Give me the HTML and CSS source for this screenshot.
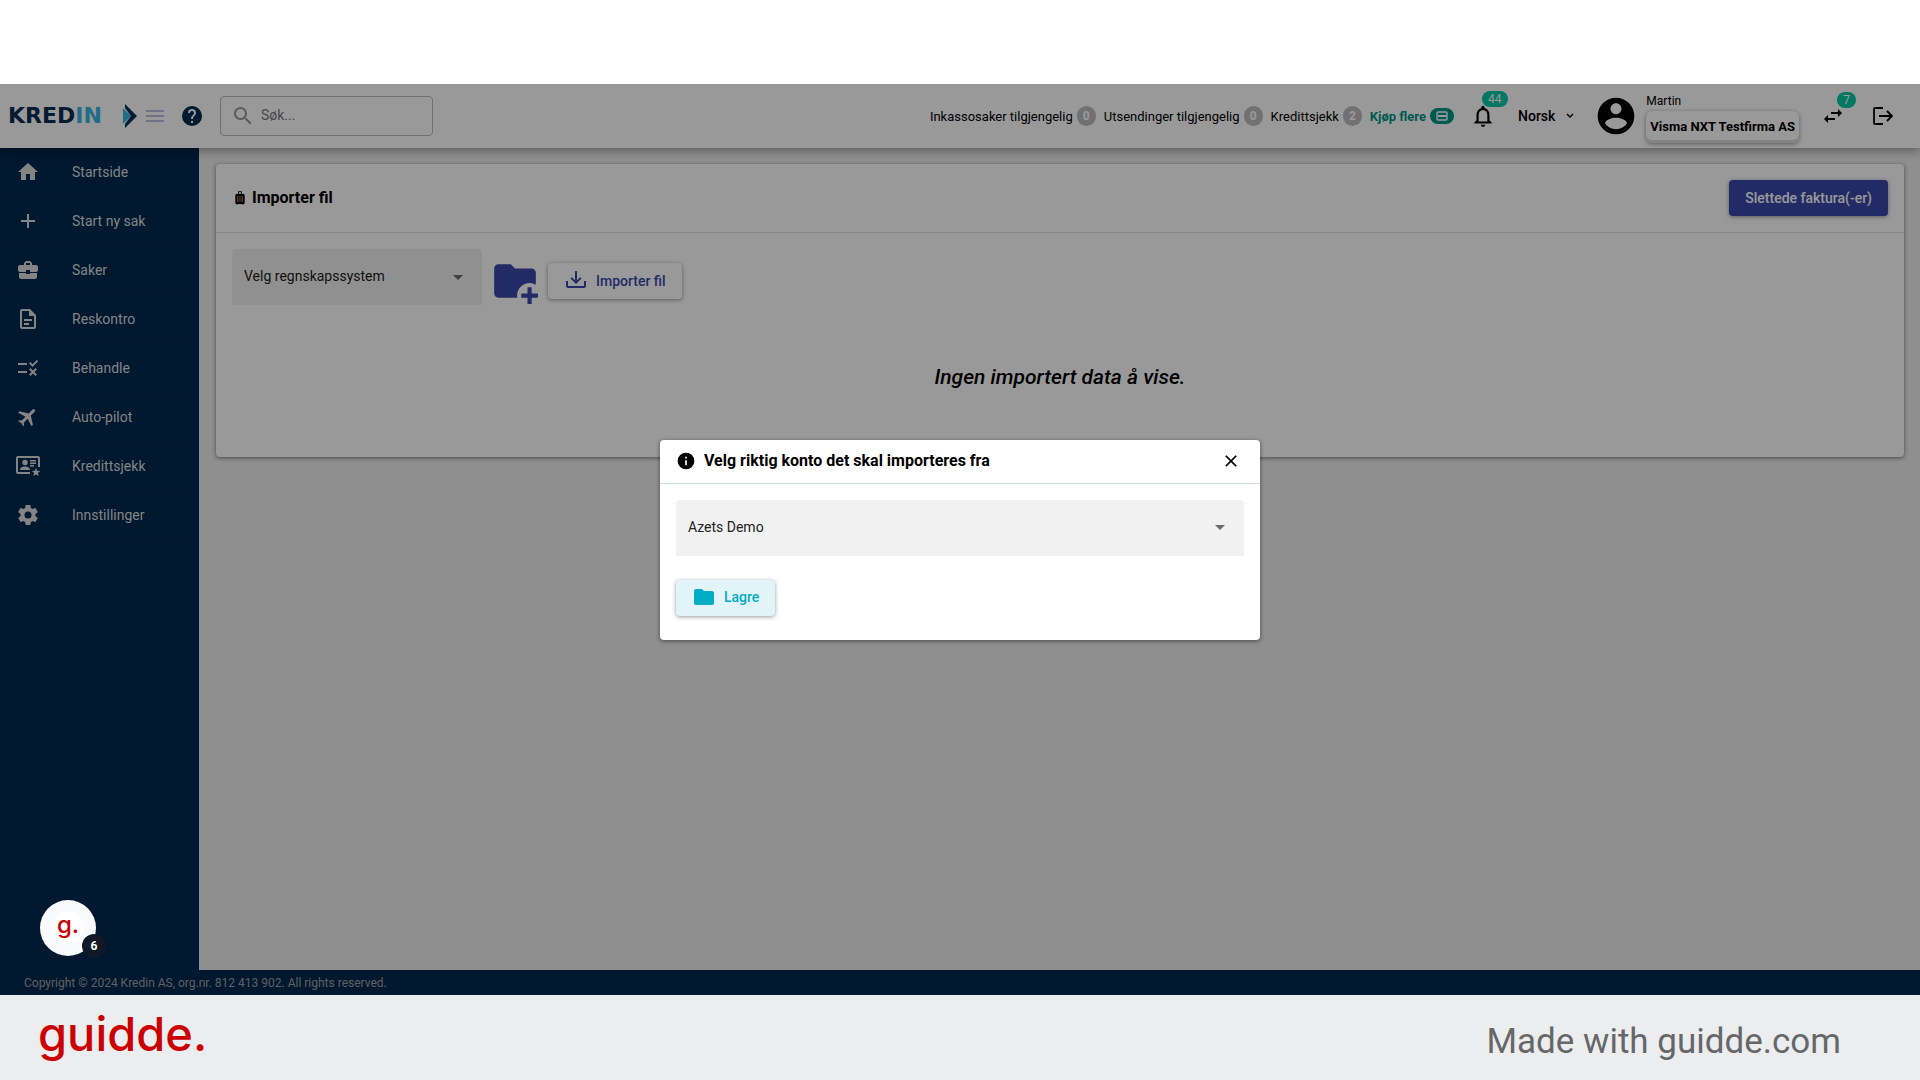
FILE: index.html
```html
<!DOCTYPE html>
<html lang="no">
<head>
<meta charset="utf-8">
<meta name="viewport" content="width=device-width, initial-scale=1">
<title>Kredin – Importer fil</title>
<link rel="stylesheet" href="styles.css">
</head>
<body>
<div class="app">
  <header class="topbar">
    <a class="logo" href="#" aria-label="Kredin"><span class="logo-word">KRED<span class="logo-accent">IN</span></span><svg width="14" height="24" viewBox="0 0 14 24"><path d="M0 4v16l8-8z" fill="#37b4e0"/><path d="M2 0l12 12L2 24v-4l6-8-6-8z" fill="#0b2d57"/></svg></a>
    <button class="icon-btn menu" aria-label="Meny"><svg width="18" height="12" viewBox="0 0 18 12"><path d="M0 1h18M0 6h18M0 11h18" stroke="#b9bce0" stroke-width="2"/></svg></button>
    <button class="icon-btn help" aria-label="Hjelp"><svg class="i24" viewBox="0 0 24 24"><path d="M15.07 11.25l-.9.92C13.45 12.89 13 13.5 13 15h-2v-.5c0-1.11.45-2.11 1.17-2.83l1.24-1.26c.37-.36.59-.86.59-1.41a2 2 0 0 0-4 0H8a4 4 0 0 1 8 0c0 .88-.36 1.67-.93 2.25M13 19h-2v-2h2M12 2a10 10 0 1 0 0 20 10 10 0 0 0 0-20z"/></svg></button>
    <label class="search"><svg class="i24" viewBox="0 0 24 24"><path d="M15.5 14h-.79l-.28-.27C15.41 12.59 16 11.11 16 9.5 16 5.91 13.09 3 9.5 3S3 5.91 3 9.5 5.91 16 9.5 16c1.61 0 3.09-.59 4.23-1.57l.27.28v.79l5 4.99L20.49 19l-4.99-5zm-6 0C7.01 14 5 11.99 5 9.5S7.01 5 9.5 5 14 7.01 14 9.5 11.99 14 9.5 14z"/></svg><input type="text" placeholder="Søk..." aria-label="Søk"></label>
    <div class="credits">
      <span class="credit">Inkassosaker tilgjengelig <b class="count">0</b></span>
      <span class="credit">Utsendinger tilgjengelig <b class="count">0</b></span>
      <span class="credit">Kredittsjekk <b class="count">2</b></span>
      <a class="credit buy" href="#">Kjøp flere <span class="buy-pill"><svg width="12" height="10" viewBox="0 0 12 10"><path d="M2 1h8a1 1 0 0 1 1 1v6a1 1 0 0 1-1 1H2a1 1 0 0 1-1-1V2a1 1 0 0 1 1-1z" fill="none" stroke="currentColor" stroke-width="1.4"/><path d="M2 5h8" stroke="currentColor" stroke-width="2"/></svg></span></a>
    </div>
    <button class="icon-btn bell" aria-label="Varsler"><svg class="i26" viewBox="0 0 24 24"><path d="M12 22c1.1 0 2-.9 2-2h-4c0 1.1.9 2 2 2zm6-6v-5c0-3.07-1.63-5.64-4.5-6.32V4c0-.83-.67-1.5-1.5-1.5s-1.5.67-1.5 1.5v.68C7.64 5.36 6 7.92 6 11v5l-2 2v1h16v-1l-2-2zm-2 1H8v-6c0-2.48 1.51-4.5 4-4.5s4 2.02 4 4.5v6z"/></svg><span class="badge">44</span></button>
    <button class="language">Norsk <svg width="8" height="6" viewBox="0 0 8 6"><path d="M1 1l3 3 3-3" fill="none" stroke="currentColor" stroke-width="1.4"/></svg></button>
    <svg class="avatar" viewBox="0 0 24 24"><path d="M12 2C6.48 2 2 6.48 2 12s4.48 10 10 10 10-4.48 10-10S17.52 2 12 2zm0 3c1.66 0 3 1.34 3 3s-1.34 3-3 3-3-1.34-3-3 1.34-3 3-3zm0 14.2c-2.5 0-4.71-1.28-6-3.22.03-1.99 4-3.08 6-3.08 1.99 0 5.97 1.09 6 3.08-1.29 1.94-3.5 3.22-6 3.22z"/></svg>
    <div class="user"><span class="user-name">Martin</span><button class="company">Visma NXT Testfirma AS</button></div>
    <button class="icon-btn swap" aria-label="Bytt firma"><svg class="i24" viewBox="0 0 24 24"><path d="M6.99 11L3 15l3.99 4v-3H14v-2H6.99v-3zM21 9l-3.99-4v3H10v2h7.01v3L21 9z"/></svg><span class="badge">7</span></button>
    <button class="icon-btn logout" aria-label="Logg ut"><svg width="20" height="18" viewBox="0 0 20 18"><path d="M10 1H2a1 1 0 0 0-1 1v14a1 1 0 0 0 1 1h8M6 9h12M14 4l5 5-5 5" fill="none" stroke="#000" stroke-width="1.8"/></svg></button>
  </header>

  <div class="body">
    <nav class="sidebar">
      <a href="#"><svg class="i24" viewBox="0 0 24 24"><path d="M10 20v-6h4v6h5v-8h3L12 3 2 12h3v8z"/></svg>Startside</a>
      <a href="#"><svg class="i24" viewBox="0 0 24 24"><path d="M19 13h-6v6h-2v-6H5v-2h6V5h2v6h6z"/></svg>Start ny sak</a>
      <a href="#"><svg class="i24" viewBox="0 0 24 24"><path d="M10 16v-1H3.01L3 19c0 1.11.89 2 2 2h14c1.11 0 2-.89 2-2v-4h-7v1h-4zm10-9h-4.01V5l-2-2h-4l-2 2v2H4c-1.1 0-2 .9-2 2v3c0 1.11.89 2 2 2h6v-2h4v2h6c1.1 0 2-.9 2-2V9c0-1.1-.9-2-2-2zm-6 0h-4V5h4v2z"/></svg>Saker</a>
      <a href="#"><svg class="i24" viewBox="0 0 24 24"><path d="M6 2a2 2 0 0 0-2 2v16a2 2 0 0 0 2 2h12a2 2 0 0 0 2-2V8l-6-6H6m0 2h7v5h5v11H6V4m2 8v2h8v-2H8m0 4v2h5v-2H8z"/></svg>Reskontro</a>
      <a href="#"><svg class="i24" viewBox="0 0 24 24"><path d="M16.54 11L13 7.46l1.41-1.41 2.12 2.12 4.24-4.24 1.41 1.41L16.54 11zM11 7H2v2h9V7zm10 6.41L19.59 12 17 14.59 14.41 12 13 13.41 15.59 16 13 18.59 14.41 20 17 17.41 19.59 20 21 18.59 18.41 16 21 13.41zM11 15H2v2h9v-2z"/></svg>Behandle</a>
      <a href="#"><svg class="i24" viewBox="0 0 24 24"><path transform="rotate(45 12 12)" d="M21 16v-2l-8-5V3.500c0-.83-.67-1.500-1.500-1.500S10 2.670 10 3.500V9l-8 5v2l8-2.500V19l-2 1.500V22l3.500-1 3.500 1v-1.500L13 19v-5.500l8 2.500z"/></svg>Auto-pilot</a>
      <a href="#"><svg class="i24" viewBox="0 0 24 24"><path d="M2 2h20a2 2 0 0 1 2 2v9h-2V4H2v14h12v2H2a2 2 0 0 1-2-2V4a2 2 0 0 1 2-2z"/><circle cx="9" cy="8.500" r="2.700"/><path d="M4 16c0-2.500 2.500-3.500 5-3.500s5 1 5 3.500zM14 6h6v1.500h-6zM14 8.500h6V10h-6zM14 11h4v1.500h-4zM20 14l1.200 2.800 3 .2-2.300 2 .8 3-2.700-1.600-2.700 1.600.8-3-2.300-2 3-.2z"/></svg>Kredittsjekk</a>
      <a href="#"><svg class="i24" viewBox="0 0 24 24"><path d="M12 15.500A3.500 3.500 0 1 1 12 8.500a3.500 3.500 0 0 1 0 7M19.430 12.970C19.470 12.650 19.500 12.330 19.500 12C19.500 11.670 19.470 11.340 19.430 11L21.540 9.370C21.730 9.220 21.780 8.950 21.660 8.730L19.660 5.270C19.540 5.050 19.270 4.960 19.050 5.050L16.560 6.050C16.040 5.660 15.500 5.320 14.870 5.070L14.500 2.420C14.460 2.180 14.250 2 14 2H10C9.750 2 9.540 2.180 9.500 2.420L9.130 5.070C8.500 5.320 7.960 5.660 7.440 6.050L4.950 5.050C4.730 4.960 4.460 5.050 4.340 5.270L2.340 8.730C2.210 8.950 2.270 9.220 2.460 9.370L4.570 11C4.530 11.340 4.500 11.670 4.500 12C4.500 12.330 4.530 12.650 4.570 12.970L2.460 14.630C2.270 14.780 2.210 15.050 2.340 15.270L4.340 18.730C4.460 18.950 4.730 19.030 4.950 18.950L7.440 17.940C7.960 18.340 8.500 18.680 9.130 18.930L9.500 21.580C9.540 21.820 9.750 22 10 22H14C14.250 22 14.460 21.820 14.500 21.580L14.870 18.930C15.500 18.670 16.040 18.340 16.560 17.940L19.050 18.950C19.270 19.030 19.540 18.950 19.660 18.730L21.660 15.270C21.780 15.050 21.730 14.780 21.540 14.630Z"/></svg>Innstillinger</a>
    </nav>
    <main class="content">
      <section class="card">
        <div class="card-head">
          <h1><svg class="i16" viewBox="0 0 24 24"><path d="M8 9h8v9H8z" fill="#b87a3c"/><path d="M17 6h-2V3c0-.55-.45-1-1-1h-4c-.55 0-1 .45-1 1v3H7c-1.100 0-2 .9-2 2v11c0 1.100.9 2 2 2 0 .55.45 1 1 1s1-.45 1-1h6c0 .55.45 1 1 1s1-.45 1-1c1.100 0 2-.9 2-2V8c0-1.100-.9-2-2-2zM9.500 18H8V9h1.500v9zm3.250 0h-1.500V9h1.500v9zm.75-12h-3V3.500h3V6zM16 18h-1.500V9H16v9z"/></svg>Importer fil</h1>
          <button class="btn btn-primary">Slettede faktura(-er)</button>
        </div>
        <div class="toolbar">
          <div class="select system"><select aria-label="Velg regnskapssystem"><option>Velg regnskapssystem</option></select><svg class="caret" width="10" height="5" viewBox="0 0 10 5"><path d="M0 0h10L5 5z"/></svg></div>
          <div class="actions">
            <button class="icon-btn add-folder" aria-label="Ny mappe"><svg width="50" height="50" viewBox="0 0 24 24"><path d="M13 19c0 .34.04.67.09 1H4c-1.100 0-2-.9-2-2V6c0-1.110.89-2 2-2h6l2 2h8c1.100 0 2 .89 2 2v5.810A6 6 0 0 0 19 13c-3.310 0-6 2.690-6 6m7-1v-3h-2v3h-3v2h3v3h2v-3h3v-2z"/></svg></button>
            <button class="btn btn-import"><svg class="i24" viewBox="0 0 24 24"><path d="M2 12h2v5h16v-5h2v5c0 1.110-.89 2-2 2H4c-1.100 0-2-.89-2-2v-5m10 3l5.550-5.460-1.420-1.410L13 11.250V2h-2v9.250L7.880 8.130 6.460 9.550 12 15z"/></svg>Importer fil</button>
          </div>
        </div>
        <p class="empty">Ingen importert data å vise.</p>
      </section>
    </main>
  </div>
  <footer class="copyright">Copyright © 2024 Kredin AS, org.nr. 812 413 902. All rights reserved.</footer>

  <div class="backdrop">
    <div class="dialog" role="dialog" aria-modal="true" aria-labelledby="dialog-title">
      <div class="dialog-head">
        <svg class="i20" viewBox="0 0 24 24"><path d="M13 9h-2V7h2m0 10h-2v-6h2M12 2a10 10 0 1 0 0 20 10 10 0 0 0 0-20z"/></svg>
        <h2 id="dialog-title">Velg riktig konto det skal importeres fra</h2>
        <button class="icon-btn" aria-label="Lukk"><svg class="i20" viewBox="0 0 24 24"><path d="M19 6.410L17.590 5 12 10.590 6.410 5 5 6.410 10.590 12 5 17.590 6.410 19 12 13.410 17.590 19 19 17.590 13.410 12z"/></svg></button>
      </div>
      <div class="dialog-body">
        <div class="select"><select aria-label="Konto"><option>Azets Demo</option></select><svg class="caret" width="10" height="5" viewBox="0 0 10 5"><path d="M0 0h10L5 5z"/></svg></div>
        <button class="btn btn-save"><svg class="i24" viewBox="0 0 24 24"><path d="M10 4H4c-1.110 0-2 .89-2 2v12a2 2 0 0 0 2 2h16a2 2 0 0 0 2-2V8c0-1.110-.9-2-2-2h-8l-2-2z"/></svg>Lagre</button>
      </div>
    </div>
  </div>
  <button class="guide-widget" aria-label="Guider"><span class="guide-mark">g.</span><span class="guide-count">6</span></button>
</div>
<div class="brandbar">
  <span class="brand">guidde.</span>
  <span class="made">Made with guidde.com</span>
</div>
</body>
</html>
```
FILE: styles.css
```css
* { box-sizing: border-box; }

body {
  margin: 0;
  padding-top: 84px;
  min-height: 100vh;
  display: flex;
  flex-direction: column;
  background: #fff;
  color: #000;
  font-family: Roboto, "Liberation Sans", sans-serif;
  font-size: 14px;
}

button, input, select { font: inherit; color: inherit; margin: 0; }
button { border: 0; padding: 0; background: none; }
a { color: inherit; text-decoration: none; }
h1, h2, p { margin: 0; }
svg { flex: none; display: block; }

.i16 { width: 16px; height: 16px; }
.i20 { width: 20px; height: 20px; }
.i24 { width: 24px; height: 24px; }
.i26 { width: 26px; height: 26px; }

.app {
  position: relative;
  flex: 1;
  display: flex;
  flex-direction: column;
  overflow: hidden;
  background: #eee;
}

/* Top bar */
.topbar {
  position: relative;
  height: 64px;
  display: flex;
  align-items: center;
  padding: 0 27px 0 8px;
  background: #fff;
  box-shadow: 0 2px 10px rgba(0, 0, 0, .4);
}
.logo { display: flex; align-items: center; justify-content: space-between; width: 129px; color: #0b2d57; }
.logo-word { font-family: "DejaVu Sans", sans-serif; font-size: 22px; font-weight: 700; line-height: 24px; }
.logo-accent { color: #37b4e0; }
.icon-btn { position: relative; display: flex; }
.menu { margin-left: 9px; }
.help { margin-left: 16px; fill: #002850; }
.search {
  display: flex;
  align-items: center;
  gap: 6px;
  width: 213px;
  height: 40px;
  margin-left: 16px;
  padding: 0 10px;
  border: 1px solid #bbb;
  border-radius: 4px;
  fill: #9a9a9a;
}
.search input { width: 100%; min-width: 0; padding: 0 0 2px; border: 0; outline: 0; background: none; }
.search input::placeholder { color: #777; opacity: 1; }

.credits { display: flex; gap: 8px; margin-left: auto; font-size: 13px; }
.credit { display: flex; align-items: center; gap: 4px; white-space: nowrap; }
.count {
  display: grid;
  place-items: center;
  width: 19px;
  height: 20px;
  border-radius: 10px;
  background: #bdbdbd;
  color: #fff;
  font-size: 12px;
}
.buy { color: #009688; font-weight: 700; }
.buy-pill {
  display: grid;
  place-items: center;
  width: 24px;
  height: 16px;
  border-radius: 8px;
  background: #009688;
  color: #fff;
}
.badge {
  position: absolute;
  left: 12px;
  top: -12px;
  min-width: 19px;
  padding: 0 6px;
  border-radius: 8px;
  background: #00c9a7;
  color: #fff;
  font-size: 12px;
  line-height: 16px;
}
.bell { margin-left: 16px; }
.language { display: flex; align-items: center; gap: 11px; margin-left: 22px; font-weight: 500; }
.avatar { width: 44px; height: 44px; margin-left: 20px; }
.user {
  display: flex;
  flex-direction: column;
  align-items: flex-start;
  gap: 2px;
  margin-left: 8px;
  padding-top: 4px;
  font-size: 12px;
}
.user-name { line-height: 16px; }
.company {
  height: 32px;
  padding: 0 4px 2px;
  border-radius: 6px;
  background: #fff;
  font-size: 13px;
  font-weight: 700;
  box-shadow: 0 1px 4px rgba(0, 0, 0, .4), inset 0 -3px 0 #ddd;
}
.swap { margin-left: 22px; }
.swap .badge { left: 16px; }
.logout { margin-left: 28px; }

/* Sidebar and content */
.body { flex: 1; display: flex; }
.sidebar { width: 199px; background: #002850; color: #dcdcdc; fill: #dcdcdc; }
.sidebar a {
  display: flex;
  align-items: center;
  gap: 32px;
  height: 49px;
  padding-left: 16px;
  border-bottom: 1px solid #00254b;
}
.content { flex: 1; padding: 16px 16px 16px 17px; }
.card {
  background: #fff;
  border-radius: 4px;
  box-shadow: 0 1px 4px rgba(0, 0, 0, .5);
  padding-bottom: 68px;
}
.card-head {
  display: flex;
  align-items: center;
  justify-content: space-between;
  padding: 16px;
  border-bottom: 1px solid #ddd;
}
h1, h2 { font-size: 16px; font-weight: 700; line-height: 24px; }
h1 { display: flex; align-items: center; gap: 4px; }
.btn {
  display: flex;
  align-items: center;
  gap: 8px;
  height: 36px;
  padding: 0 16px 1px;
  border-radius: 4px;
  font-weight: 500;
  box-shadow: 0 1px 4px rgba(0, 0, 0, .4);
}
.btn-primary { background: #3949ab; color: #fff; }
.btn-import { background: #fff; color: #3949ab; fill: #3949ab; }
.btn-save { margin-top: 24px; background: #e3f4f8; color: #00acc6; fill: #00acc6; }
.toolbar { display: flex; align-items: flex-start; gap: 8px; padding: 16px 16px 0; }
.actions { display: flex; align-items: center; gap: 8px; height: 50px; margin-top: 7px; }
.add-folder { fill: #3949ab; }
.select { display: grid; align-items: center; background: #f1f1f1; border-radius: 4px 4px 0 0; color: #212121; }
.select > * { grid-area: 1 / 1; }
.select select {
  width: 100%;
  height: 56px;
  padding: 0 40px 2px 12px;
  border: 0;
  background: none;
  appearance: none;
}
.caret { justify-self: end; margin-right: 19px; fill: #6b6b6b; pointer-events: none; }
.system { width: 250px; }
.empty { margin-top: 59px; text-align: center; font-size: 21px; font-style: italic; font-weight: 500; line-height: 24px; }

.copyright {
  padding: 1px 24px 0;
  background: #002850;
  color: #a0a0a0;
  font-size: 12px;
  line-height: 24px;
}

/* Modal */
.backdrop {
  position: absolute;
  inset: 0;
  display: grid;
  place-items: center;
  background: rgba(0, 0, 0, .4);
}
.dialog { width: 600px; border-radius: 4px; background: #fff; box-shadow: 0 1px 4px rgba(0, 0, 0, .5); }
.dialog-head {
  display: flex;
  align-items: center;
  gap: 8px;
  height: 44px;
  padding: 0 19px 0 16px;
  border-bottom: 1px solid #cfdbe0;
}
.dialog-head .icon-btn { margin-left: auto; }
.dialog-body { padding: 16px 16px 24px; }

.guide-widget {
  position: absolute;
  left: 40px;
  bottom: 39px;
  width: 56px;
  height: 56px;
  border-radius: 50%;
  background: #f9fafc;
}
.guide-mark {
  display: grid;
  place-items: center;
  width: 32px;
  height: 32px;
  margin: 0 auto;
  padding-bottom: 6px;
  border-radius: 50%;
  background: #fff;
  color: #c00;
  font: 500 24px/24px Inter, sans-serif;
}
.guide-count {
  position: absolute;
  left: 42px;
  top: 34px;
  width: 24px;
  border-radius: 50%;
  background: #111827;
  color: #fff;
  font-size: 12px;
  font-weight: 700;
  line-height: 24px;
  text-align: center;
}

.brandbar {
  display: flex;
  align-items: center;
  justify-content: space-between;
  height: 85px;
  padding: 0 79px 0 38px;
  background: #ecedef;
}
.brand { padding-bottom: 8px; color: #c00; font: 500 47px/64px Inter, sans-serif; }
.made { padding-top: 8px; color: #666769; font-size: 35px; line-height: 40px; }
```
